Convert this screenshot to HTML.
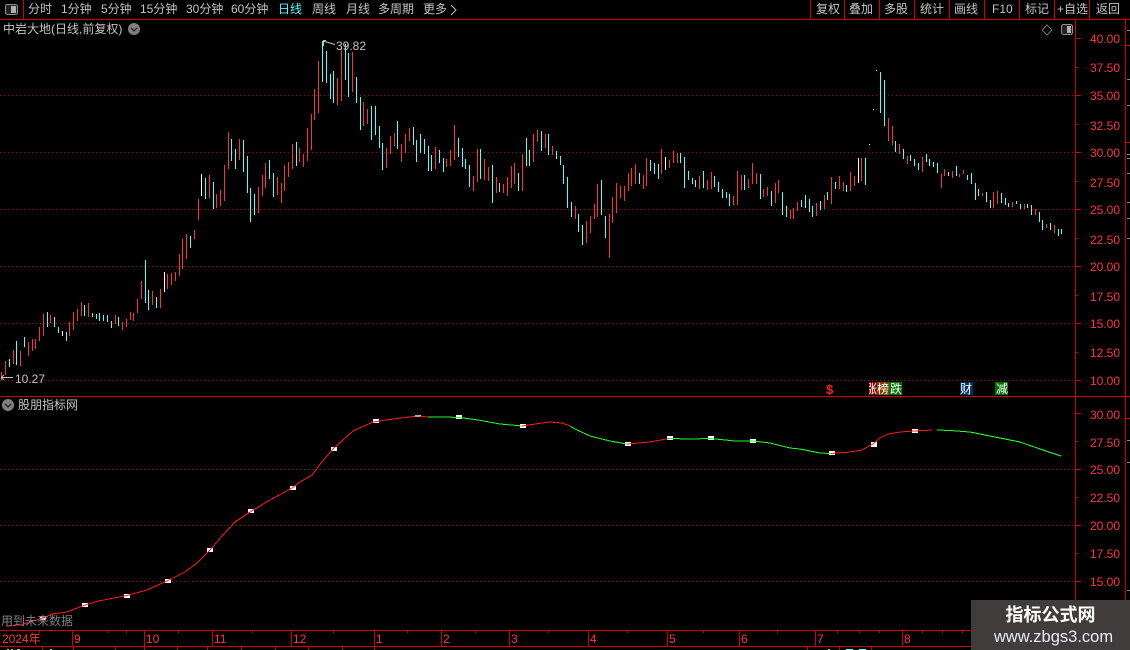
<!DOCTYPE html>
<html><head><meta charset="utf-8">
<style>
html,body{margin:0;padding:0;background:#000;width:1130px;height:650px;overflow:hidden}
svg{display:block;position:absolute;left:0;top:0}
text{font-family:"Liberation Sans","WenQuanYi Zen Hei","Noto Sans CJK SC",sans-serif;font-size:12px}
.t text{fill:#c4c4c4}
.p text{fill:#ff3636}
</style></head>
<body>
<svg width="1130" height="650" viewBox="0 0 1130 650" xmlns="http://www.w3.org/2000/svg">
<!-- dotted grid -->
<g stroke="#b00000" stroke-width="1" stroke-dasharray="1 3">
<path d="M0 95.500H1075"/>
<path d="M0 152.500H1075"/>
<path d="M0 209.500H1075"/>
<path d="M0 266.500H1075"/>
<path d="M0 323.500H1075"/>
<path d="M0 380.500H1075"/>
<path d="M0 469.500H1075"/>
<path d="M0 525.500H1075"/>
<path d="M0 581.500H1075"/>
</g>
<!-- frame lines -->
<g stroke="#d00000" stroke-width="1" fill="none">
<path d="M0 19.500H1130M0 396.500H1130M0 630.500H975M0 646.500H975"/>
<path d="M23.500 0V19M810.500 0V19M844.500 0V19M879.500 0V19M914.500 0V19M949.500 0V19M984.500 0V19M1019.500 0V19M1054.500 0V19M1089.500 0V19"/>
<path d="M1075.500 19V600M1125.500 19V600"/>
<path d="M1075 38.500H1081M1075 67.500H1078M1075 95.500H1081M1075 124.500H1078M1075 152.500H1081M1075 181.500H1078M1075 209.500H1081M1075 238.500H1078M1075 266.500H1081M1075 295.500H1078M1075 323.500H1081M1075 352.500H1078M1075 380.500H1081"/>
<path d="M1075 413.500H1081M1075 441.500H1078M1075 469.500H1081M1075 497.500H1078M1075 525.500H1081M1075 553.500H1078M1075 581.500H1081"/>
<path d="M1125 45.500H1130M1125 142.500H1130M1125 418.500H1130"/>
<path d="M72.500 630V646M144.500 630V646M212.500 630V646M291.500 630V646M374.500 630V646M441.500 630V646M509.500 630V646M588.500 630V646M667.500 630V646M739.500 630V646M815.500 630V646M902.500 630V646"/>
<path d="M39.500 631V633M108.500 631V633M126.500 631V633M178.500 631V633M252.500 631V633M333.500 631V633M407.500 631V633M475.500 631V633M548.500 631V633M627.500 631V633M703.500 631V633M777.500 631V633M837.500 631V633M859.500 631V633M879.500 631V633M922.500 631V633M942.500 631V633M962.500 631V633"/>
<path d="M42.500 646V650M73.500 646V650M115.500 646V650M144.500 646V650M177.500 646V650M207.500 646V650M241.500 646V650M275.500 646V650M308.500 646V650M342.500 646V650M374.500 646V650M807.500 646V650M839.500 646V650M871.500 646V650"/>
</g>
<g stroke="#8a8a8a" stroke-width="1">
<path d="M1127 30.500H1130M1127 79.500H1130M1127 105.500H1130M1127 154.500H1130M1127 158.500H1130M1127 173.500H1130M1127 202.500H1130M1127 218.500H1130M1127 238.500H1130M1127 440.500H1130M1127 462.500H1130M1127 590.500H1130"/>
</g>

<!-- candles -->
<g fill="none" stroke-width="3">
<g transform="translate(.1666667,230) scale(.3333333333)">
<path stroke="#ff3232" d="M4 426V450M16 393V435M40 360V402M61 363V408M85 336V378M97 327V363M106 327V357M118 291V333M130 252V318M151 255V279M208 276V318M220 246V300M232 237V273M244 216V258M265 219V261M346 255V282M367 276V300M379 267V291M391 246V270M400 249V273M412 207V249M424 153V207M457 183V225M481 177V234M502 132V177M514 129V165M526 126V153M538 72V138M547 27V117M559 12V87M583 0V27"/>
<path stroke="#4dffff" d="M28 387V411M49 333V405M73 321V351M142 246V291M163 261V291M175 291V309M199 306V333M253 225V258M277 249V261M289 252V267M298 249V273M310 255V273M322 255V276M334 273V294M355 261V288M436 90V219M445 180V240M469 201V234M571 18V54"/>
<path stroke="#fff" d="M187 303V318M493 126V186"/>
</g>
<g transform="translate(180.1666667,30) scale(.3333333333)">
<path stroke="#ff3232" d="M55 507V570M88 435V504M109 492V534M121 480V528M133 405V513M145 306V417M178 327V390M235 471V549M247 435V498M256 399V474M292 441V495M304 459V519M313 405V483M325 396V441M337 342V417M358 354V396M370 372V411M382 294V393M394 252V360M403 177V270M415 93V249M472 144V225M484 54V213M517 66V186M550 216V288M562 237V282M619 354V414M631 318V372M643 309V348M664 342V396M676 312V369M688 294V333"/>
<path stroke="#4dffff" d="M76 444V507M100 456V537M154 327V393M166 357V417M190 330V426M202 378V489M211 474V576M223 492V555M268 390V447M280 429V501M349 336V408M427 33V156M439 63V159M451 132V207M460 123V219M496 42V150M505 69V201M529 141V219M541 201V300M574 228V330M586 228V315M598 288V354M607 339V420M652 273V357M700 291V345M709 330V396"/>
<path stroke="#fff" d="M64 432V498"/>
</g>
<g transform="translate(420.5,110) scale(.3333333333)">
<path stroke="#ff3232" d="M45 111V177M78 147V171M90 120V168M102 45V150M159 198V243M171 117V216M192 147V210M204 171V213M228 201V249M249 222V249M261 201V258M273 168V234M282 159V222M306 132V243M339 72V156M351 60V96M375 72V114M396 108V135M465 288V327M498 333V399M510 318V369M522 282V327M531 222V321M567 312V444M576 261V339M588 219V309M600 228V264M612 228V273M624 189V243M633 174V228M645 162V222M669 195V237M678 144V228"/>
<path stroke="#4dffff" d="M0 72V129M12 87V132M24 108V183M33 135V183M57 120V159M69 144V186M114 84V141M126 114V171M135 147V177M147 165V231M180 117V207M216 165V279M237 219V246M294 189V243M318 84V168M327 120V168M363 63V123M384 72V135M408 123V147M420 138V165M429 165V222M441 201V294M453 276V321M474 312V366M486 345V405M543 210V315M555 318V384M657 189V222M690 150V183M702 159V192M714 162V207"/>
</g>
<g transform="translate(650.5,60) scale(.3333333333)">
<path stroke="#ff3232" d="M33 267V342M57 300V324M69 273V309M81 279V309M147 348V387M171 360V390M183 336V387M249 408V435M261 333V435M273 345V390M294 357V384M306 309V372M318 339V372M339 387V411M351 381V408M375 369V429M384 360V399M420 450V477M429 444V477M441 426V453M498 429V468M522 405V447M543 351V432M567 348V387M579 366V393M600 336V393M612 348V378M633 294V363M714 174V243"/>
<path stroke="#4dffff" d="M90 279V309M102 291V384M114 333V360M126 354V372M135 360V381M159 333V384M192 348V381M204 366V396M216 387V414M228 396V414M237 402V438M282 345V390M330 342V417M363 393V438M396 396V465M408 438V471M453 420V441M465 405V444M477 417V456M486 438V471M510 423V450M531 396V420M555 366V387M588 375V396M645 294V375M690 36V159M702 60V198"/>
<path stroke="#fff" d="M45 291V330M624 294V369M657 252V255M669 147V150M678 30V33"/>
</g>
<g transform="translate(860.5,60) scale(.3333333333)">
<path stroke="#ff3232" d="M96 198V255M117 252V282M141 288V312M186 291V336M243 342V384M252 327V348M276 333V354M297 342V351M309 330V342M366 399V408M399 396V444M411 393V432M456 426V441M492 432V447M525 447V465M558 492V504M582 495V519"/>
<path stroke="#4dffff" d="M105 243V276M129 267V297M150 285V303M162 297V318M174 309V330M198 282V306M207 297V318M219 306V321M231 309V339M264 336V348M288 318V348M321 345V360M333 339V372M345 369V420M354 387V408M378 396V426M390 420V444M423 399V429M435 414V435M444 429V441M468 423V432M480 432V447M501 432V444M513 435V465M537 456V486M546 480V510M570 489V510M594 507V528M603 507V522"/>
</g>
</g>

<!-- lower panel markers -->
<g fill="#fff">
<rect x="40" y="616" width="6" height="4"/><rect x="82" y="603" width="6" height="4"/><rect x="124" y="594" width="6" height="4"/><rect x="165" y="579" width="6" height="4"/><rect x="207" y="548" width="6" height="4"/><rect x="248" y="509" width="6" height="4"/><rect x="290" y="486" width="6" height="4"/><rect x="331" y="447" width="6" height="4"/><rect x="373" y="419" width="6" height="4"/><rect x="415" y="415" width="6" height="2"/><rect x="456" y="415" width="6" height="4"/><rect x="520" y="424" width="6" height="4"/><rect x="625" y="442" width="6" height="4"/><rect x="667" y="436" width="6" height="4"/><rect x="708" y="436" width="6" height="4"/><rect x="750" y="439" width="6" height="4"/><rect x="829" y="451" width="6" height="4"/><rect x="871" y="442" width="6" height="5"/><rect x="912" y="429" width="6" height="4"/>
</g>
<!-- lower panel curve -->
<g fill="none" stroke-width="1" shape-rendering="crispEdges">
<polyline stroke="#ff1a1a" points="6,626 20,625 43,618 52,614 67,612 85,605 100,600.7 127,595.5 147,590 167,581 185,572 197,563 210,550 222,536 235,522 250,512 267,501.7 292,488 300,482 312,475 321,463 333,449 353,431 373,422 393,419 417,416 428,417"/>
<polyline stroke="#22ff22" points="428,417 445,417 459,417.5 467,418.5 480,420.3 500,424 522,426"/>
<polyline stroke="#ff1a1a" points="522,426 535,424 550,422 562,423 570,426"/>
<polyline stroke="#22ff22" points="570,426 575,429 590,436 610,441 627,444"/>
<polyline stroke="#ff1a1a" points="627,444 650,442 669,438.5"/>
<polyline stroke="#22ff22" points="669,438.5 690,439 711,438.5 735,441 752,441 770,443 790,448 800,449 810,451 820,453 831,453.5"/>
<polyline stroke="#ff1a1a" points="831,453.5 850,452 862,450 873,444 880,438 888,434 900,432 914,431 932,430"/>
<polyline stroke="#22ff22" points="937,430 950,430.5 970,432 985,435 1000,438 1020,442 1040,449 1061,456"/>
</g>

<!-- toolbar left -->
<rect x="5.500" y="4.500" width="12" height="10" rx="2" fill="#222" stroke="#909090"/>
<rect x="11" y="6" width="5" height="7" fill="#b0b0b0"/>
<g class="t">
<text x="28" y="13">分时</text>
<text x="61" y="13">1分钟</text>
<text x="101" y="13">5分钟</text>
<text x="140" y="13">15分钟</text>
<text x="186" y="13">30分钟</text>
<text x="231" y="13">60分钟</text>
<text x="278" y="13" style="fill:#4dffff">日线</text>
<text x="312" y="13">周线</text>
<text x="346" y="13">月线</text>
<text x="378" y="13">多周期</text>
<text x="423" y="13">更多</text>
<!-- toolbar right -->
<text x="816" y="13">复权</text>
<text x="849" y="13">叠加</text>
<text x="884" y="13">多股</text>
<text x="920" y="13">统计</text>
<text x="954" y="13">画线</text>
<text x="992" y="13">F10</text>
<text x="1025" y="13">标记</text>
<text x="1057" y="13">+自选</text>
<text x="1096" y="13">返回</text>
<!-- titles -->
<text x="3" y="33">中岩大地(日线,前复权)</text>
<text x="336" y="50">39.82</text>
<text x="15" y="383">10.27</text>
<text x="18" y="409">股朋指标网</text>
<text x="1" y="625" style="fill:#808080">用到未来数据</text>
</g>
<path d="M451 5L456 10L451 15" fill="none" stroke="#c4c4c4"/>
<circle cx="134" cy="29" r="6" fill="#808080"/>
<path d="M131 28L134 31L137 28" fill="none" stroke="#222" stroke-width="1.300"/>
<circle cx="8" cy="405" r="6" fill="#808080"/>
<path d="M5 404L8 407L11 404" fill="none" stroke="#222" stroke-width="1.300"/>
<path d="M1047 25L1052 30L1047 35L1042 30Z" fill="none" stroke="#777"/>
<rect x="1061.500" y="24.500" width="11" height="10" rx="2" fill="#222" stroke="#909090"/>
<rect x="1067" y="26" width="4" height="7" fill="#b0b0b0"/>
<!-- high / low arrows -->
<path d="M323.500 46V41M323 40.500H326M323 41L335 44.500" fill="none" stroke="#c4c4c4"/>
<path d="M1 377.500H13M1 377.500L4 375M1 377.500L4 380" fill="none" stroke="#c4c4c4"/>

<!-- price labels -->
<g class="p">
<text x="1090" y="43">40.00</text>
<text x="1090" y="72">37.50</text>
<text x="1090" y="100">35.00</text>
<text x="1090" y="130">32.50</text>
<text x="1090" y="157">30.00</text>
<text x="1090" y="187">27.50</text>
<text x="1090" y="214">25.00</text>
<text x="1090" y="244">22.50</text>
<text x="1090" y="271">20.00</text>
<text x="1090" y="301">17.50</text>
<text x="1090" y="328">15.00</text>
<text x="1090" y="357">12.50</text>
<text x="1090" y="385">10.00</text>
<text x="1090" y="419">30.00</text>
<text x="1090" y="447">27.50</text>
<text x="1090" y="474">25.00</text>
<text x="1090" y="502">22.50</text>
<text x="1090" y="530">20.00</text>
<text x="1090" y="558">17.50</text>
<text x="1090" y="586">15.00</text>
<text x="2" y="643">2024年</text>
<text x="74" y="643">9</text>
<text x="146" y="643">10</text>
<text x="214" y="643">11</text>
<text x="293" y="643">12</text>
<text x="376" y="643">1</text>
<text x="443" y="643">2</text>
<text x="511" y="643">3</text>
<text x="590" y="643">4</text>
<text x="669" y="643">5</text>
<text x="741" y="643">6</text>
<text x="817" y="643">7</text>
<text x="904" y="643">8</text>
</g>

<!-- clipped bottom-row text tops -->
<g fill="#c4c4c4">
<rect x="7" y="649" width="2" height="1"/><rect x="11" y="649" width="2" height="1"/><rect x="17" y="649" width="3" height="1"/><rect x="50" y="649" width="2" height="1"/><rect x="828" y="649" width="2" height="1"/>
</g>
<rect x="846" y="649" width="7" height="1" fill="#4dffff"/>
<rect x="859" y="649" width="7" height="1" fill="#4dffff"/>

<!-- signal badges -->
<rect x="869" y="382" width="9" height="13" fill="#800000"/>
<rect x="877" y="382" width="13" height="13" fill="#804000"/>
<rect x="889" y="382" width="13" height="13" fill="#007000"/>
<rect x="960" y="382" width="13" height="13" fill="#003068"/>
<rect x="995" y="382" width="13" height="13" fill="#007000"/>
<text x="826" y="394" style="fill:#ff2020;font-weight:bold;font-size:13px">$</text>
<text x="865" y="393" style="fill:#fff">涨</text>
<rect x="863" y="382" width="6" height="13" fill="#000"/>
<text x="877" y="393" style="fill:#fff">榜</text>
<text x="890" y="393" style="fill:#fff">跌</text>
<text x="960" y="393" style="fill:#fff">财</text>
<text x="996" y="393" style="fill:#fff">减</text>

<!-- watermark -->
<rect x="971" y="600" width="159" height="50" fill="#413c3c"/>
<text x="1050.500" y="621" text-anchor="middle" style="font-size:18px;font-weight:bold;fill:#fff">指标公式网</text>
<text x="1053.500" y="642" text-anchor="middle" style="font-size:16.500px;fill:#e6eefa">www.zbgs3.com</text>
</svg>
</body></html>
